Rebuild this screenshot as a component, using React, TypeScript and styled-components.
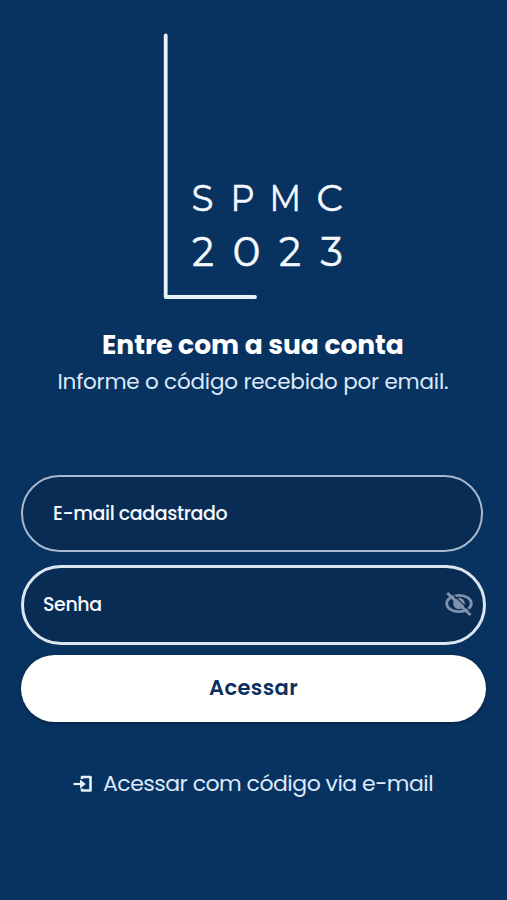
import React from "react";
import styled, { createGlobalStyle, css } from "styled-components";

const GlobalStyle = createGlobalStyle`
  *, *::before, *::after { box-sizing: border-box; }
  body { margin: 0; background: #08325f; }
`;

const Screen = styled.main`
  width: 507px;
  height: 900px;
  padding: 33px 21px 0;
  overflow: hidden;
  display: flex;
  flex-direction: column;
  background: #08325f;
  color: #f6f9ff;
  font-family: Poppins, Inter, sans-serif;
  font-feature-settings: "cv11";
  white-space: nowrap;
`;

const Logo = styled.svg`
  display: block;
  flex: none;
  margin-left: 139px;
  font-family: Montserrat, Inter, sans-serif;
  font-feature-settings: "cv09";
  font-weight: 400;

  text {
    stroke: #f6f9ff;
    stroke-width: 0.5px;
  }
`;

const Title = styled.h1`
  margin: 25px 0 0 81px;
  font-size: 26.5px;
  line-height: 40px;
  font-weight: 700;
  letter-spacing: -0.02px;
  color: #fff;
`;

const Subtitle = styled.p`
  margin: 1px 0 0 36.5px;
  font-size: 21.5px;
  line-height: 32px;
  color: #dce9fb;
  letter-spacing: -0.2px;
`;

const Form = styled.form`
  display: flex;
  flex-direction: column;
  margin-top: 77px;
`;

const Field = styled.label<{ $active?: boolean }>`
  display: flex;
  align-items: center;
  justify-content: space-between;
  border-style: solid;
  background: #082c53;
  font-size: 19px;
  font-weight: 500;
  letter-spacing: -0.4px;
  ${({ $active }) =>
    $active
      ? css`
          width: 465px;
          height: 80px;
          margin-top: 13px;
          padding: 0 10px 2px 19px;
          border-width: 3px;
          border-color: #dce6f3;
          border-radius: 40px;
        `
      : css`
          width: 462px;
          height: 77px;
          padding: 0 29px 0 30px;
          border-width: 2px;
          border-color: #a9b9cf;
          border-radius: 39px;
        `}
`;

const Submit = styled.button`
  width: 465px;
  height: 67px;
  margin-top: 10px;
  padding: 0 0 2px;
  border: 0;
  border-radius: 34px;
  background: #fff;
  box-shadow: 0 1px 3px rgba(0, 15, 40, 0.5);
  color: #0b3060;
  font: inherit;
  font-feature-settings: inherit;
  font-size: 21px;
  font-weight: 600;
  letter-spacing: 0.4px;
`;

const CodeLink = styled.a`
  display: flex;
  align-items: center;
  gap: 10px;
  height: 32px;
  margin: 45px 0 0 52px;
  color: #dce9fb;
  font-size: 22px;
  letter-spacing: -0.51px;
`;

const EyeOff = () => (
  <svg width="28" height="26" viewBox="0 0 28 26" fill="none" stroke="#8193ac">
    <ellipse cx="14" cy="12.5" rx="12.3" ry="8.2" strokeWidth="2.8" />
    <circle cx="14" cy="12.5" r="5.8" fill="#8193ac" stroke="none" />
    <path d="M5 .6 28 22.6" stroke="#082c53" strokeWidth="1.2" />
    <path d="M2.3 2 25.5 24" strokeWidth="3" />
  </svg>
);

const EnterIcon = () => (
  <svg width="20" height="18" viewBox="0 -1 20 18" fill="none" stroke="#e6effb">
    <path d="M.5 9h10" strokeWidth="2.2" />
    <path d="M7 4.5 12.8 9 7 13.5z" fill="#e6effb" stroke="none" />
    <path d="M9 4V2h8.5v13.5H9v-2" strokeWidth="2.6" strokeLinejoin="round" />
  </svg>
);

// Each logo row is tracked widely, with every letter set to its own width.
const logoRows = [
  { y: 210.5, size: 37.5, letters: [["S", 191.5, 22], ["P", 230.5, 24], ["M", 269.5, 31.5], ["C", 316.5, 26.5]] },
  { y: 266, size: 41.5, letters: [["2", 192, 22], ["0", 232.5, 28], ["2", 279, 22], ["3", 320.5, 22.5]] },
] as { y: number; size: number; letters: [string, number, number][] }[];

export default function App() {
  return (
    <>
      <GlobalStyle />
      <Screen>
        <Logo width="190" height="267" viewBox="160 33 190 267" fill="#f6f9ff">
          <path
            d="M165.7 35.5V297H255"
            fill="none"
            stroke="#eaf2fc"
            strokeWidth="3.8"
            strokeLinecap="round"
            strokeLinejoin="round"
          />
          {logoRows.map((row) =>
            row.letters.map(([letter, x, width]) => (
              <text
                key={`${row.y}-${x}`}
                x={x}
                y={row.y}
                fontSize={row.size}
                textLength={width}
                lengthAdjust="spacingAndGlyphs"
              >
                {letter}
              </text>
            ))
          )}
        </Logo>
        <Title>Entre com a sua conta</Title>
        <Subtitle>Informe o código recebido por email.</Subtitle>
        <Form>
          <Field>E-mail cadastrado</Field>
          <Field $active>
            Senha
            <EyeOff />
          </Field>
          <Submit type="button">Acessar</Submit>
        </Form>
        <CodeLink>
          <EnterIcon />
          Acessar com código via e-mail
        </CodeLink>
      </Screen>
    </>
  );
}
